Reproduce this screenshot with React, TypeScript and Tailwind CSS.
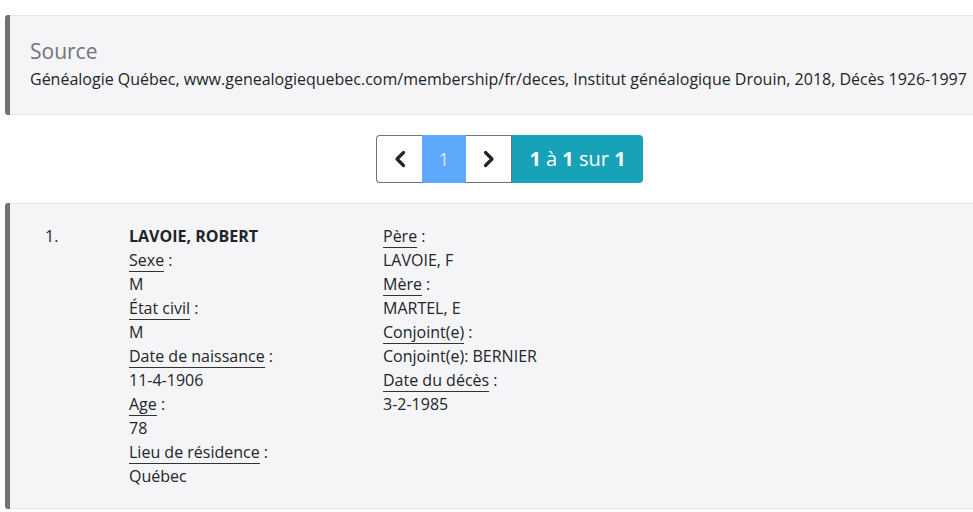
import React from 'react';

const font = { fontFamily: '"Open Sans", "Noto Sans", sans-serif' };

function Label({ children }: { children: React.ReactNode }) {
  return (
    <div>
      <span className="border-b border-[#333]">{children}</span> :
    </div>
  );
}

export default function App() {
  const left = [
    ['Sexe', 'M'],
    ['État civil', 'M'],
    ['Date de naissance', '11-4-1906'],
    ['Age', '78'],
    ['Lieu de résidence', 'Québec'],
  ];
  const right = [
    ['Père', 'LAVOIE, F'],
    ['Mère', 'MARTEL, E'],
    ['Conjoint(e)', 'Conjoint(e): BERNIER'],
    ['Date du décès', '3-2-1985'],
  ];

  return (
    <div className="w-[973px] h-[512px] overflow-hidden bg-white text-[#212529]" style={font}>
      <div className="w-[1040px] pt-[15px]">
        {/* Source panel */}
        <div className="ml-[5px] flex bg-[#f5f5f7] border-y border-[#e6e6e9] rounded-l-[3px]">
          <div className="w-[5px] bg-[#737373] rounded-l-[3px] -my-px" />
          <div className="pl-[20px] pt-[21px] pb-[21px]">
            <div className="text-[21px] leading-[28px] text-[#707479]">Source</div>
            <div className="text-[16px] leading-[28px] whitespace-nowrap">
              Généalogie Québec, www.genealogiequebec.com/membership/fr/deces, Institut généalogique Drouin, 2018, Décès 1926-1997
            </div>
          </div>
        </div>

        {/* Pagination */}
        <div className="pl-[376px] pt-[20px] pb-[20px] flex">
          <div className="flex h-[48px] text-[20px]">
            <button className="w-[46px] flex items-center justify-center border border-[#6c757d] border-r-0 rounded-l-[4px] bg-white text-[#212529]">
              <svg width="14" height="18" viewBox="0 0 14 18" fill="none" stroke="currentColor" strokeWidth="3.2" strokeLinecap="round" strokeLinejoin="round">
                <path d="M10.5 2.5 L4 9 L10.5 15.5" />
              </svg>
            </button>
            <div className="w-[44px] flex items-center justify-center bg-[#5ea9fb] text-[#d8ebff] text-[18px]">1</div>
            <button className="w-[46px] flex items-center justify-center border border-[#6c757d] border-l-0 bg-white text-[#212529]">
              <svg width="14" height="18" viewBox="0 0 14 18" fill="none" stroke="currentColor" strokeWidth="3.2" strokeLinecap="round" strokeLinejoin="round">
                <path d="M3.5 2.5 L10 9 L3.5 15.5" />
              </svg>
            </button>
            <div className="w-[131px] flex items-center justify-center bg-[#17a2b8] text-white rounded-r-[4px]">
              <span><b>1</b> à <b>1</b> sur <b>1</b></span>
            </div>
          </div>
        </div>

        {/* Result panel */}
        <div className="ml-[5px] flex bg-[#f5f5f7] border-y border-[#e6e6e9] rounded-l-[3px]">
          <div className="w-[5px] bg-[#737373] rounded-l-[3px] -my-px" />
          <div className="flex text-[16px] leading-[24px] pt-[20px] pb-[20px]">
            <div className="w-[119px] pl-[35px]">1.</div>
            <div className="w-[254px]">
              <div className="font-bold">LAVOIE, ROBERT</div>
              {left.map(([k, v]) => (
                <React.Fragment key={k}>
                  <Label>{k}</Label>
                  <div>{v}</div>
                </React.Fragment>
              ))}
            </div>
            <div>
              {right.map(([k, v]) => (
                <React.Fragment key={k}>
                  <Label>{k}</Label>
                  <div>{v}</div>
                </React.Fragment>
              ))}
            </div>
          </div>
        </div>
      </div>
    </div>
  );
}
